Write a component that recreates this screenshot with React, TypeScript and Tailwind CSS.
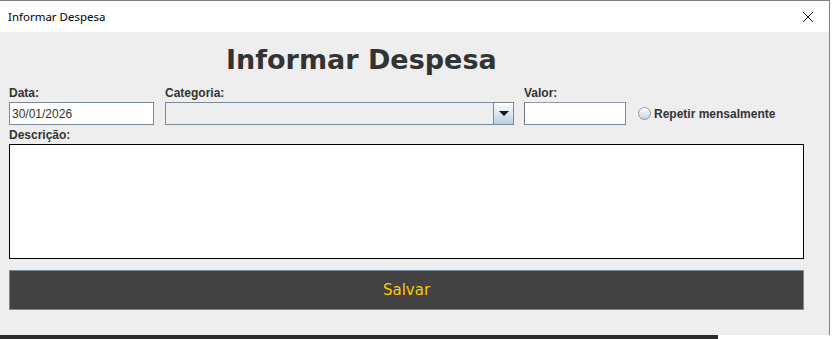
export default function App() {
  return (
    <div className="w-[834px] h-[339px] bg-white flex flex-col overflow-hidden">
      <div className="w-[830px] h-[335px] border-t border-r border-[#828282] flex flex-col">
        <div className="h-[31px] bg-white flex items-center justify-between pl-[8px] pr-[12px]">
          <span className="text-[11.5px] text-black" style={{ fontFamily: '"Noto Sans", sans-serif' }}>
            Informar Despesa
          </span>
          <svg width="12" height="12" viewBox="0 0 12 12" className="mr-[3px]">
            <path d="M1 1 L11 11 M11 1 L1 11" stroke="#111" strokeWidth="1" fill="none" />
          </svg>
        </div>
        <div
          className="flex-1 bg-[#eeeeee] pt-[12px] pl-[9px] text-[#333333]"
          style={{ fontFamily: '"Liberation Sans", Arial, sans-serif' }}
        >
          <h1
            className="pl-[217px] text-[27px] leading-[32px] font-bold text-[#333333]"
            style={{ fontFamily: '"DejaVu Sans", sans-serif' }}
          >
            Informar Despesa
          </h1>
          <div className="flex items-end mt-[10px]">
            <div className="w-[145px] flex flex-col gap-[2px]">
              <label className="text-[12px] leading-[14px] font-bold">Data:</label>
              <div className="h-[23px] bg-white border border-[#7a8a99] flex items-center pl-[2px] text-[12px]">
                30/01/2026
              </div>
            </div>
            <div className="w-[349px] ml-[11px] flex flex-col gap-[2px]">
              <label className="text-[12px] leading-[14px] font-bold">Categoria:</label>
              <div className="h-[23px] border border-[#7a8a99] bg-[#eeeeee] flex">
                <div className="flex-1" />
                <div className="w-[20px] border-l border-[#7a8a99] bg-gradient-to-b from-white to-[#b8cfe5] flex items-center justify-center">
                  <svg width="10" height="6" viewBox="0 0 10 6">
                    <path d="M0 0 H10 L5 5 Z" fill="#111" />
                  </svg>
                </div>
              </div>
            </div>
            <div className="w-[102px] ml-[10px] flex flex-col gap-[2px]">
              <label className="text-[12px] leading-[14px] font-bold">Valor:</label>
              <div className="h-[23px] bg-white border border-[#7a8a99] border-t-[#8d99a6] border-l-[#6d7b88]" />
            </div>
            <div className="h-[23px] ml-[12px] flex items-center gap-[3px]">
              <span className="w-[13px] h-[13px] rounded-full border border-[#8899aa] bg-gradient-to-b from-white to-[#c4d4e4]" />
              <span className="text-[12px] font-bold">Repetir mensalmente</span>
            </div>
          </div>
          <div className="mt-[3px] flex flex-col gap-[2px] w-[795px]">
            <label className="text-[12px] leading-[14px] font-bold">Descrição:</label>
            <div className="h-[115px] bg-white border border-black" />
          </div>
          <button
            className="mt-[11px] w-[795px] h-[40px] bg-[#424242] border border-[#7a8a99] text-[#ffc800] text-[15px]"
            style={{ fontFamily: '"DejaVu Sans", sans-serif' }}
          >
            Salvar
          </button>
        </div>
      </div>
      <div className="h-[4px] w-[718px] bg-[#2b2b2b]" />
    </div>
  );
}
